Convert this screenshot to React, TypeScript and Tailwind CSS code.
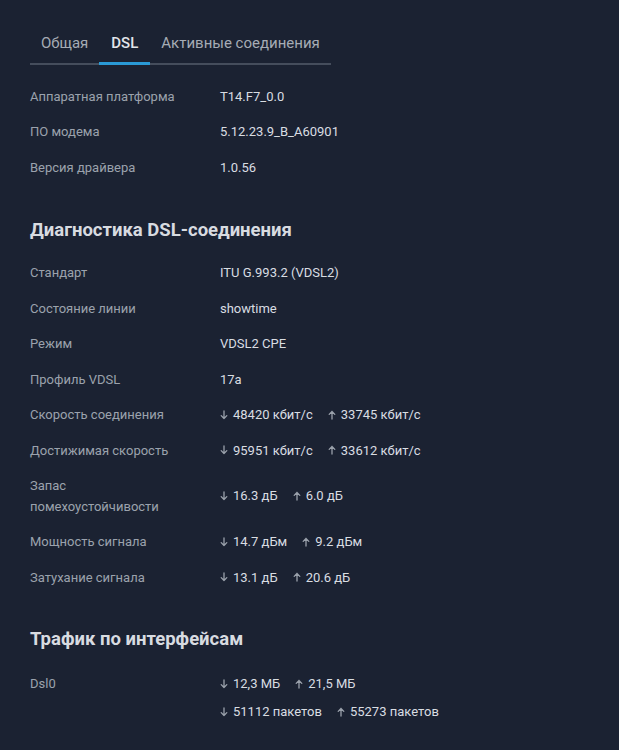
import React from "react";

const Down = () => (
  <svg width="8" height="10" viewBox="0 0 8 10" className="inline-block mr-[5px] -mt-[1px]" fill="none" stroke="#9aa1ab" strokeWidth="1.3">
    <path d="M4 1v7.5M1.2 5.6L4 8.5l2.8-2.9" strokeLinecap="round" strokeLinejoin="round" />
  </svg>
);
const Up = () => (
  <svg width="8" height="10" viewBox="0 0 8 10" className="inline-block mr-[5px] -mt-[1px]" fill="none" stroke="#9aa1ab" strokeWidth="1.3">
    <path d="M4 9V1.5M1.2 4.4L4 1.5l2.8 2.9" strokeLinecap="round" strokeLinejoin="round" />
  </svg>
);

const Pair = ({ d, u }: { d: string; u: string }) => (
  <span className="flex items-center whitespace-nowrap">
    <span className="flex items-center mr-[15px]"><Down />{d}</span>
    <span className="flex items-center"><Up />{u}</span>
  </span>
);

const Row = ({ label, children }: { label: string; children: React.ReactNode }) => (
  <div className="flex items-center py-[7.5px] leading-[20.5px] text-[13px]">
    <div className="w-[160px] text-[#9ba2ad]">{label}</div>
    <div className="ml-[30px] text-[#d9dde2] whitespace-nowrap">{children}</div>
  </div>
);

export default function App() {
  return (
    <div className="min-h-[750px] w-full bg-[#1b2232] px-[30px] pt-[23px]" style={{ fontFamily: "Roboto, 'Noto Sans', sans-serif" }}>
      <div className="inline-flex whitespace-nowrap border-b-2 border-[#454d5c] text-[15px] leading-[20px]">
        <div className="px-[11px] py-[10px] text-[#a6acb5]">Общая</div>
        <div className="-mb-[2px] border-b-[3px] border-[#2a9ad6] px-[12px] pt-[10px] pb-[9px] font-medium text-[#e2e5e9]">DSL</div>
        <div className="px-[11px] py-[10px] text-[#a6acb5]">Активные соединения</div>
      </div>

      <div className="mt-[14px]">
        <Row label="Аппаратная платформа">T14.F7_0.0</Row>
        <Row label="ПО модема">5.12.23.9_B_A60901</Row>
        <Row label="Версия драйвера">1.0.56</Row>
      </div>

      <h2 className="mt-[32px] mb-[14px] text-[18.5px] leading-[24px] font-bold text-[#d8dbe0]">Диагностика DSL-соединения</h2>

      <div>
        <Row label="Стандарт">ITU G.993.2 (VDSL2)</Row>
        <Row label="Состояние линии">showtime</Row>
        <Row label="Режим">VDSL2 CPE</Row>
        <Row label="Профиль VDSL">17a</Row>
        <Row label="Скорость соединения"><Pair d="48420 кбит/с" u="33745 кбит/с" /></Row>
        <Row label="Достижимая скорость"><Pair d="95951 кбит/с" u="33612 кбит/с" /></Row>
        <Row label="Запас помехоустойчивости"><Pair d="16.3 дБ" u="6.0 дБ" /></Row>
        <Row label="Мощность сигнала"><Pair d="14.7 дБм" u="9.2 дБм" /></Row>
        <Row label="Затухание сигнала"><Pair d="13.1 дБ" u="20.6 дБ" /></Row>
      </div>

      <h2 className="mt-[31px] mb-[16px] text-[18.5px] leading-[24px] font-bold text-[#d8dbe0]">Трафик по интерфейсам</h2>

      <div className="flex items-start py-[7.5px] leading-[20.5px] text-[13px]">
        <div className="w-[160px] text-[#9ba2ad]">Dsl0</div>
        <div className="ml-[30px] flex flex-col gap-[7.5px] text-[#d9dde2]">
          <Pair d="12,3 МБ" u="21,5 МБ" />
          <Pair d="51112 пакетов" u="55273 пакетов" />
        </div>
      </div>
    </div>
  );
}
